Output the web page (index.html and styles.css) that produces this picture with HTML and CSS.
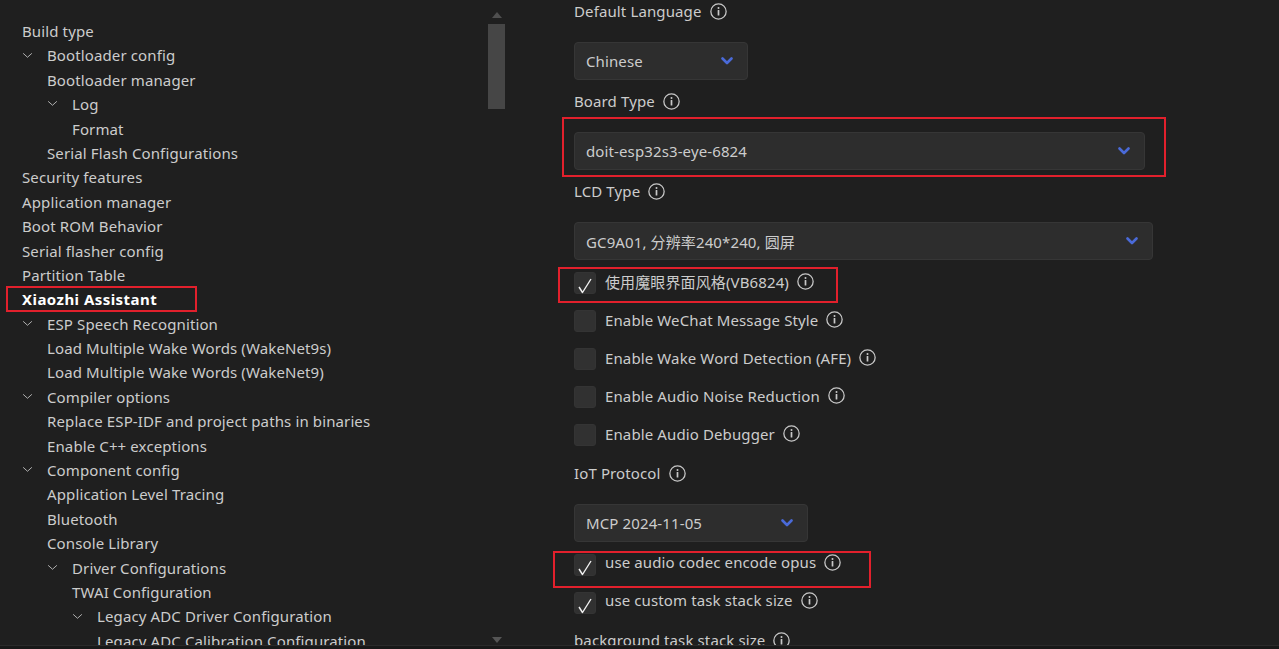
FILE: index.html
```html
<!DOCTYPE html>
<html lang="en">
<head>
<meta charset="utf-8">
<title>Xiaozhi config</title>
<link rel="stylesheet" href="styles.css">
</head>
<body>
<div class="page">
  <div class="main">
    <nav class="tree">
      <div class="row l0"><span class="tw"></span><span>Build type</span></div>
      <div class="row l1"><span class="tw"><svg class="chev" viewBox="0 0 12 8"><path d="M1 1.5 L6 6 L11 1.5"/></svg></span><span>Bootloader config</span></div>
      <div class="row l1"><span class="tw"></span><span>Bootloader manager</span></div>
      <div class="row l2"><span class="tw"><svg class="chev" viewBox="0 0 12 8"><path d="M1 1.5 L6 6 L11 1.5"/></svg></span><span>Log</span></div>
      <div class="row l2"><span class="tw"></span><span>Format</span></div>
      <div class="row l1"><span class="tw"></span><span>Serial Flash Configurations</span></div>
      <div class="row l0"><span class="tw"></span><span>Security features</span></div>
      <div class="row l0"><span class="tw"></span><span>Application manager</span></div>
      <div class="row l0"><span class="tw"></span><span>Boot ROM Behavior</span></div>
      <div class="row l0"><span class="tw"></span><span>Serial flasher config</span></div>
      <div class="row l0"><span class="tw"></span><span>Partition Table</span></div>
      <div class="row l0 active"><span class="tw"></span><span>Xiaozhi Assistant</span></div>
      <div class="row l1"><span class="tw"><svg class="chev" viewBox="0 0 12 8"><path d="M1 1.5 L6 6 L11 1.5"/></svg></span><span>ESP Speech Recognition</span></div>
      <div class="row l1"><span class="tw"></span><span>Load Multiple Wake Words (WakeNet9s)</span></div>
      <div class="row l1"><span class="tw"></span><span>Load Multiple Wake Words (WakeNet9)</span></div>
      <div class="row l1"><span class="tw"><svg class="chev" viewBox="0 0 12 8"><path d="M1 1.5 L6 6 L11 1.5"/></svg></span><span>Compiler options</span></div>
      <div class="row l1"><span class="tw"></span><span>Replace ESP-IDF and project paths in binaries</span></div>
      <div class="row l1"><span class="tw"></span><span>Enable C++ exceptions</span></div>
      <div class="row l1"><span class="tw"><svg class="chev" viewBox="0 0 12 8"><path d="M1 1.5 L6 6 L11 1.5"/></svg></span><span>Component config</span></div>
      <div class="row l1"><span class="tw"></span><span>Application Level Tracing</span></div>
      <div class="row l1"><span class="tw"></span><span>Bluetooth</span></div>
      <div class="row l1"><span class="tw"></span><span>Console Library</span></div>
      <div class="row l2"><span class="tw"><svg class="chev" viewBox="0 0 12 8"><path d="M1 1.5 L6 6 L11 1.5"/></svg></span><span>Driver Configurations</span></div>
      <div class="row l2"><span class="tw"></span><span>TWAI Configuration</span></div>
      <div class="row l3"><span class="tw"><svg class="chev" viewBox="0 0 12 8"><path d="M1 1.5 L6 6 L11 1.5"/></svg></span><span>Legacy ADC Driver Configuration</span></div>
      <div class="row l3"><span class="tw"></span><span>Legacy ADC Calibration Configuration</span></div>
      <div class="mark mark-xiaozhi"></div>
    </nav>

    <div class="scrollbar">
      <svg class="arrow up" viewBox="0 0 10 6"><path d="M0 6 L5 0 L10 6 Z"/></svg>
      <div class="thumb"></div>
      <svg class="arrow down" viewBox="0 0 10 6"><path d="M0 0 L10 0 L5 6 Z"/></svg>
    </div>

    <section class="panel">
      <div class="label">Default Language <svg class="info" viewBox="0 0 16 16"><circle cx="8" cy="8" r="7.2"/><rect x="7.2" y="6.6" width="1.6" height="5.2" rx="0.3"/><circle class="dot" cx="8" cy="4.6" r="0.95"/></svg></div>
      <div class="select w-lang"><span>Chinese</span><svg class="bchev" viewBox="0 0 12 8"><path d="M1.5 1.5 L6 6 L10.5 1.5"/></svg></div>

      <div class="label">Board Type <svg class="info" viewBox="0 0 16 16"><circle cx="8" cy="8" r="7.2"/><rect x="7.2" y="6.6" width="1.6" height="5.2" rx="0.3"/><circle class="dot" cx="8" cy="4.6" r="0.95"/></svg></div>
      <div class="select w-board"><span>doit-esp32s3-eye-6824</span><svg class="bchev" viewBox="0 0 12 8"><path d="M1.5 1.5 L6 6 L10.5 1.5"/></svg></div>

      <div class="label">LCD Type <svg class="info" viewBox="0 0 16 16"><circle cx="8" cy="8" r="7.2"/><rect x="7.2" y="6.6" width="1.6" height="5.2" rx="0.3"/><circle class="dot" cx="8" cy="4.6" r="0.95"/></svg></div>
      <div class="select w-lcd"><span>GC9A01, 分辨率240*240, 圆屏</span><svg class="bchev" viewBox="0 0 12 8"><path d="M1.5 1.5 L6 6 L10.5 1.5"/></svg></div>

      <div class="checks first">
        <div class="check"><span class="box"><svg class="tick" viewBox="0 0 22 22"><path d="M5 15 L8.5 20.5 L17 7"/></svg></span><span class="ctext">使用魔眼界面风格(VB6824)</span><svg class="info" viewBox="0 0 16 16"><circle cx="8" cy="8" r="7.2"/><rect x="7.2" y="6.6" width="1.6" height="5.2" rx="0.3"/><circle class="dot" cx="8" cy="4.6" r="0.95"/></svg></div>
        <div class="check"><span class="box"></span><span class="ctext">Enable WeChat Message Style</span><svg class="info" viewBox="0 0 16 16"><circle cx="8" cy="8" r="7.2"/><rect x="7.2" y="6.6" width="1.6" height="5.2" rx="0.3"/><circle class="dot" cx="8" cy="4.6" r="0.95"/></svg></div>
        <div class="check"><span class="box"></span><span class="ctext">Enable Wake Word Detection (AFE)</span><svg class="info" viewBox="0 0 16 16"><circle cx="8" cy="8" r="7.2"/><rect x="7.2" y="6.6" width="1.6" height="5.2" rx="0.3"/><circle class="dot" cx="8" cy="4.6" r="0.95"/></svg></div>
        <div class="check"><span class="box"></span><span class="ctext">Enable Audio Noise Reduction</span><svg class="info" viewBox="0 0 16 16"><circle cx="8" cy="8" r="7.2"/><rect x="7.2" y="6.6" width="1.6" height="5.2" rx="0.3"/><circle class="dot" cx="8" cy="4.6" r="0.95"/></svg></div>
        <div class="check"><span class="box"></span><span class="ctext">Enable Audio Debugger</span><svg class="info" viewBox="0 0 16 16"><circle cx="8" cy="8" r="7.2"/><rect x="7.2" y="6.6" width="1.6" height="5.2" rx="0.3"/><circle class="dot" cx="8" cy="4.6" r="0.95"/></svg></div>
      </div>

      <div class="label after-checks">IoT Protocol <svg class="info" viewBox="0 0 16 16"><circle cx="8" cy="8" r="7.2"/><rect x="7.2" y="6.6" width="1.6" height="5.2" rx="0.3"/><circle class="dot" cx="8" cy="4.6" r="0.95"/></svg></div>
      <div class="select w-iot"><span>MCP 2024-11-05</span><svg class="bchev" viewBox="0 0 12 8"><path d="M1.5 1.5 L6 6 L10.5 1.5"/></svg></div>

      <div class="checks first">
        <div class="check raised"><span class="box"><svg class="tick" viewBox="0 0 22 22"><path d="M5 15 L8.5 20.5 L17 7"/></svg></span><span class="ctext">use audio codec encode opus</span><svg class="info" viewBox="0 0 16 16"><circle cx="8" cy="8" r="7.2"/><rect x="7.2" y="6.6" width="1.6" height="5.2" rx="0.3"/><circle class="dot" cx="8" cy="4.6" r="0.95"/></svg></div>
        <div class="check raised"><span class="box"><svg class="tick" viewBox="0 0 22 22"><path d="M5 15 L8.5 20.5 L17 7"/></svg></span><span class="ctext">use custom task stack size</span><svg class="info" viewBox="0 0 16 16"><circle cx="8" cy="8" r="7.2"/><rect x="7.2" y="6.6" width="1.6" height="5.2" rx="0.3"/><circle class="dot" cx="8" cy="4.6" r="0.95"/></svg></div>
      </div>

      <div class="label after-checks2">background task stack size <svg class="info" viewBox="0 0 16 16"><circle cx="8" cy="8" r="7.2"/><rect x="7.2" y="6.6" width="1.6" height="5.2" rx="0.3"/><circle class="dot" cx="8" cy="4.6" r="0.95"/></svg></div>

      <div class="mark mark-board"></div>
      <div class="mark mark-eye"></div>
      <div class="mark mark-opus"></div>
    </section>
  </div>
  <div class="statusline"></div>
</div>
</body>
</html>
```

FILE: styles.css
```css
* { box-sizing: border-box; }

html, body {
  margin: 0;
  padding: 0;
  background: #1f1f1f;
  height: 100%;
  overflow: hidden;
}

body {
  font-family: "Noto Sans", "Noto Sans CJK SC", sans-serif;
  font-size: 15px;
  letter-spacing: 0.12px;
  color: #cccccc;
}

.page {
  height: 649px;
  display: grid;
  grid-template-rows: 645px 4px;
}

.main {
  display: grid;
  grid-template-columns: 488px 17px 1fr;
  overflow: hidden;
}

/* ---------- tree ---------- */
.tree {
  position: relative;
  padding-top: 19px;
  white-space: nowrap;
  overflow: hidden;
}

.row {
  display: flex;
  align-items: center;
  height: 24.4px;
  line-height: 24.4px;
}

.row.l0 { padding-left: 0; }
.row.l1 { padding-left: 25px; }
.row.l2 { padding-left: 50px; }
.row.l3 { padding-left: 75px; }

.tw {
  width: 22px;
  flex: none;
  display: flex;
  align-items: center;
}

.chev {
  width: 11px;
  height: 7px;
  margin-left: -3px;
  margin-top: -1px;
  fill: none;
  stroke: #c4c4c4;
  stroke-width: 1;
}

.row.active {
  color: #ffffff;
  font-weight: 700;
  letter-spacing: 0.45px;
}

/* ---------- scrollbar ---------- */
.scrollbar {
  position: relative;
  display: flex;
  flex-direction: column;
  align-items: center;
}

.arrow {
  width: 10px;
  height: 6px;
  fill: #4f4f4f;
}

.arrow.up { margin-top: 12px; }

.thumb {
  width: 17px;
  height: 85px;
  margin-top: 6px;
  background: #464646;
}

.arrow.down {
  margin-top: auto;
  margin-bottom: 8px;
  fill: #555555;
}

/* ---------- panel ---------- */
.panel {
  position: relative;
  padding-left: 69px;
  display: flex;
  flex-direction: column;
  align-items: flex-start;
}

.label {
  height: 22px;
  line-height: 22px;
  display: flex;
  align-items: center;
  white-space: nowrap;
}

.info {
  width: 17px;
  height: 17px;
  margin-left: 8px;
  flex: none;
}

.info circle {
  fill: none;
  stroke: #c8c8c8;
  stroke-width: 1.2;
}

.info circle.dot {
  fill: #c8c8c8;
  stroke: none;
}

.info rect { fill: #c8c8c8; }

.select {
  margin-top: 20px;
  margin-bottom: 10px;
  height: 38px;
  padding: 0 14px 0 11px;
  display: flex;
  align-items: center;
  justify-content: space-between;
  background: #2d2d2d;
  border: 1px solid #363636;
  border-radius: 4px;
  white-space: nowrap;
}

.w-lang { width: 174px; }
.w-board { width: 571px; }
.w-lcd { width: 579px; }
.w-iot { width: 234px; }

.bchev {
  width: 12px;
  height: 8px;
  fill: none;
  stroke: #4a6ad8;
  stroke-width: 2.6;
  stroke-linecap: round;
  stroke-linejoin: round;
}

.checks {
  display: flex;
  flex-direction: column;
  gap: 16px;
}

.checks.first { margin-top: 2px; }

.check {
  height: 22px;
  display: flex;
  align-items: center;
  white-space: nowrap;
}

.box {
  width: 22px;
  height: 22px;
  flex: none;
  border-radius: 3px;
  background: #313131;
  border: 1px solid #343434;
  position: relative;
}

.tick {
  position: absolute;
  left: -1px;
  top: -1px;
  width: 22px;
  height: 22px;
  fill: none;
  stroke: #f0f0f0;
  stroke-width: 1.4;
  stroke-linejoin: round;
}

.ctext {
  margin-left: 9px;
  margin-top: -3px;
}

.info { margin-top: -3px; }
.label .info { margin-top: 0; }

.check.raised .ctext,
.check.raised .info { margin-top: -6px; }

.after-checks { margin-top: 16px; }
.after-checks2 { margin-top: 15px; }

/* ---------- annotation boxes ---------- */
.mark {
  position: absolute;
  border: 2px solid #e2202c;
  pointer-events: none;
}

.mark-xiaozhi { left: 6px; top: 286px; width: 191px; height: 26px; }
.mark-board  { left: 57px; top: 117px; width: 604px; height: 60px; }
.mark-eye    { left: 53px; top: 267px; width: 280px; height: 36px; }
.mark-opus   { left: 48px; top: 551px; width: 318px; height: 37px; }

.statusline {
  background: #181818;
  border-top: 1px solid #2a2a2a;
}
```
